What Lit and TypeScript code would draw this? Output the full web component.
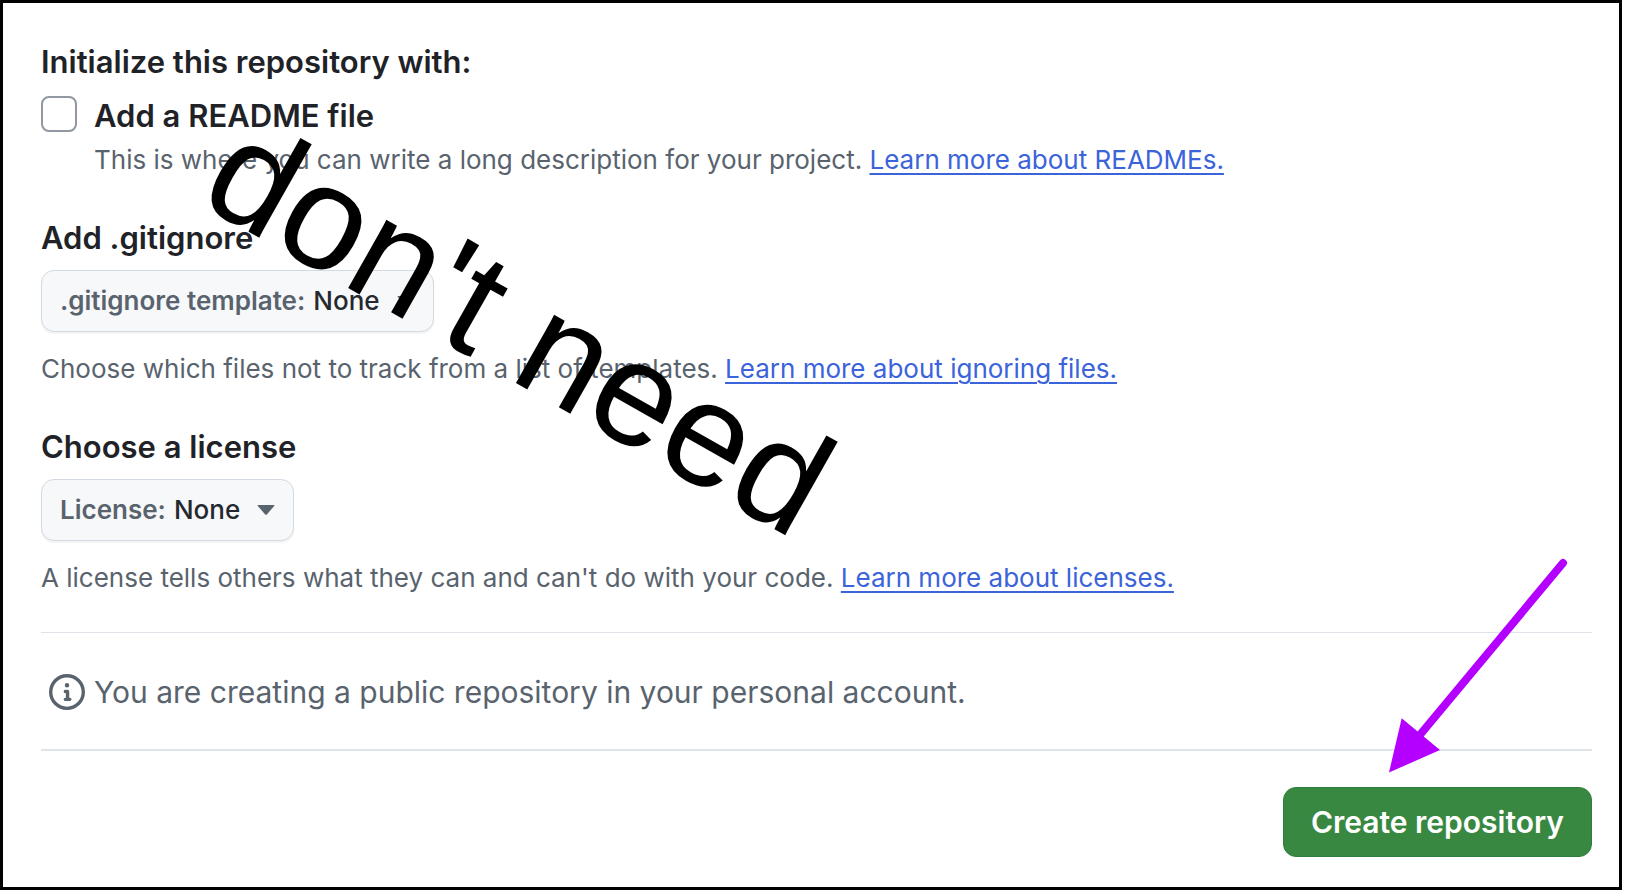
import { LitElement, html, css } from "lit";
import { customElement, property, state } from "lit/decorators.js";

@customElement("option-picker")
class OptionPicker extends LitElement {
  @property() label = "";
  @property({ type: Array }) options: string[] = [];

  static styles = css`
    :host {
      display: flex;
    }
    .picker {
      display: flex;
      align-items: center;
      box-sizing: border-box;
      height: 62px;
      padding: 0 18px;
      border: 1px solid #d3d9e0;
      border-radius: 13px;
      background: #f6f8fa;
      box-shadow: 0 2px 1px rgba(31, 35, 40, 0.05);
      color: #59636e;
      font: 500 26px/32px Inter, "Liberation Sans", sans-serif;
    }
    .label {
      font-weight: 600;
    }
    .value {
      appearance: none;
      field-sizing: content;
      margin: 0 0 0 8px;
      padding: 0;
      border: 0;
      background: none;
      color: #25292e;
      font: inherit;
    }
    .caret {
      width: 18px;
      height: 10px;
      margin-left: 17px;
      fill: #59636e;
    }
  `;

  render() {
    return html`
      <div class="picker">
        <label class="label" for="value">${this.label}</label>
        <select class="value" id="value">
          ${this.options.map((o) => html`<option>${o}</option>`)}
        </select>
        <svg class="caret" viewBox="0 0 18 10" aria-hidden="true">
          <path d="M1.2 0H16.8Q18 0 17.2 1L9.8 9.4Q9 10.2 8.2 9.4L.8 1Q0 0 1.2 0Z" />
        </svg>
      </div>
    `;
  }
}

@customElement("app-root")
class AppRoot extends LitElement {
  @state() private readme = false;

  static styles = css`
    :host {
      display: block;
      background: #fff;
      font-family: Inter, "Liberation Sans", sans-serif;
    }
    .frame {
      position: relative;
      margin-right: 12px;
      padding: 39px 27px 30px 38px;
      border: 3px solid #000;
      overflow: hidden;
    }
    .form {
      display: flex;
      flex-direction: column;
    }
    .title {
      margin: 0;
      color: #1f2328;
      font-size: 31px;
      font-weight: 600;
      line-height: 40px;
    }
    .note {
      margin: 0;
      color: #59636e;
      font-size: 26px;
      line-height: 32px;
    }
    .link {
      color: #3b63da;
      text-decoration: underline;
      text-decoration-thickness: 2px;
      text-underline-offset: 4px;
    }
    .check-row {
      display: grid;
      grid-template-columns: 36px 1fr;
      column-gap: 17px;
      row-gap: 8px;
      margin-top: 14px;
    }
    .check {
      appearance: none;
      box-sizing: border-box;
      width: 36px;
      height: 36px;
      margin: 0;
      border: 2px solid #9198a1;
      border-radius: 8px;
      background: #fff;
    }
    .check:checked {
      border-color: #0969da;
      background: #0969da;
    }
    .check-row .note {
      grid-column: 2;
    }
    .section {
      display: flex;
      flex-direction: column;
      margin-top: 42px;
    }
    .section option-picker {
      margin: 12px 0 21px;
    }
    .info {
      display: flex;
      align-items: center;
      gap: 9px;
      margin-top: 38px;
      padding: 39px 0 37px 8px;
      border-top: 1px solid #dfe4ea;
      border-bottom: 2px solid #dfe4ea;
      color: #59636e;
      font-size: 30px;
      line-height: 40px;
    }
    .info-text {
      margin: 0;
    }
    .info-icon {
      flex: none;
      width: 36px;
      height: 36px;
      fill: #59636e;
    }
    .actions {
      display: flex;
      justify-content: flex-end;
      margin-top: 36px;
    }
    .create {
      height: 70px;
      padding: 0 27px;
      border: 1px solid #2f7d3b;
      border-radius: 13px;
      background: #388841;
      color: #fff;
      font: 600 30px/40px Inter, "Liberation Sans", sans-serif;
    }
    .scribble {
      position: absolute;
      left: 193px;
      top: 74px;
      color: #000;
      font-family: "Liberation Sans", Arial, sans-serif;
      font-size: 148px;
      line-height: 148px;
      white-space: nowrap;
      transform: rotate(29.5deg);
      transform-origin: 0 125px;
      pointer-events: none;
    }
    .arrow {
      position: absolute;
      right: 46px;
      top: 552px;
      width: 190px;
      height: 224px;
      pointer-events: none;
    }
  `;

  render() {
    return html`
      <main class="frame">
        <form class="form" @submit=${(e: Event) => e.preventDefault()}>
          <h2 class="title">Initialize this repository with:</h2>
          <div class="check-row">
            <input
              class="check"
              id="readme"
              type="checkbox"
              .checked=${this.readme}
              @change=${(e: Event) => (this.readme = (e.target as HTMLInputElement).checked)}
            />
            <label class="title" for="readme">Add a README file</label>
            <p class="note">
              This is where you can write a long description for your project.
              <a class="link" href="#readmes">Learn more about READMEs.</a>
            </p>
          </div>

          <section class="section">
            <h2 class="title">Add .gitignore</h2>
            <option-picker label=".gitignore template:" .options=${["None"]}></option-picker>
            <p class="note">
              Choose which files not to track from a list of templates.
              <a class="link" href="#ignoring">Learn more about ignoring files.</a>
            </p>
          </section>

          <section class="section">
            <h2 class="title">Choose a license</h2>
            <option-picker label="License:" .options=${["None"]}></option-picker>
            <p class="note">
              A license tells others what they can and can't do with your code.
              <a class="link" href="#licenses">Learn more about licenses.</a>
            </p>
          </section>

          <div class="info">
            <svg class="info-icon" viewBox="0 0 16 16" aria-hidden="true">
              <path
                d="M0 8a8 8 0 1 1 16 0A8 8 0 0 1 0 8Zm8-6.5a6.5 6.5 0 1 0 0 13 6.5 6.5 0 0 0 0-13ZM6.5 7.75A.75.75 0 0 1 7.25 7h1a.75.75 0 0 1 .75.75v2.75h.25a.75.75 0 0 1 0 1.5h-2a.75.75 0 0 1 0-1.5h.25v-2h-.25a.75.75 0 0 1-.75-.75ZM8 6a1 1 0 1 1 0-2 1 1 0 0 1 0 2Z"
              />
            </svg>
            <p class="info-text">You are creating a public repository in your personal account.</p>
          </div>

          <div class="actions">
            <button class="create" type="submit">Create repository</button>
          </div>
        </form>

        <div class="scribble">don't need</div>
        <svg class="arrow" viewBox="0 0 190 224" aria-hidden="true">
          <path d="M180 8L36 181" stroke="#b300ff" stroke-width="8" stroke-linecap="round" />
          <path d="M6 217.500L18.700 163.300L57 195Z" fill="#b300ff" />
        </svg>
      </main>
    `;
  }
}
